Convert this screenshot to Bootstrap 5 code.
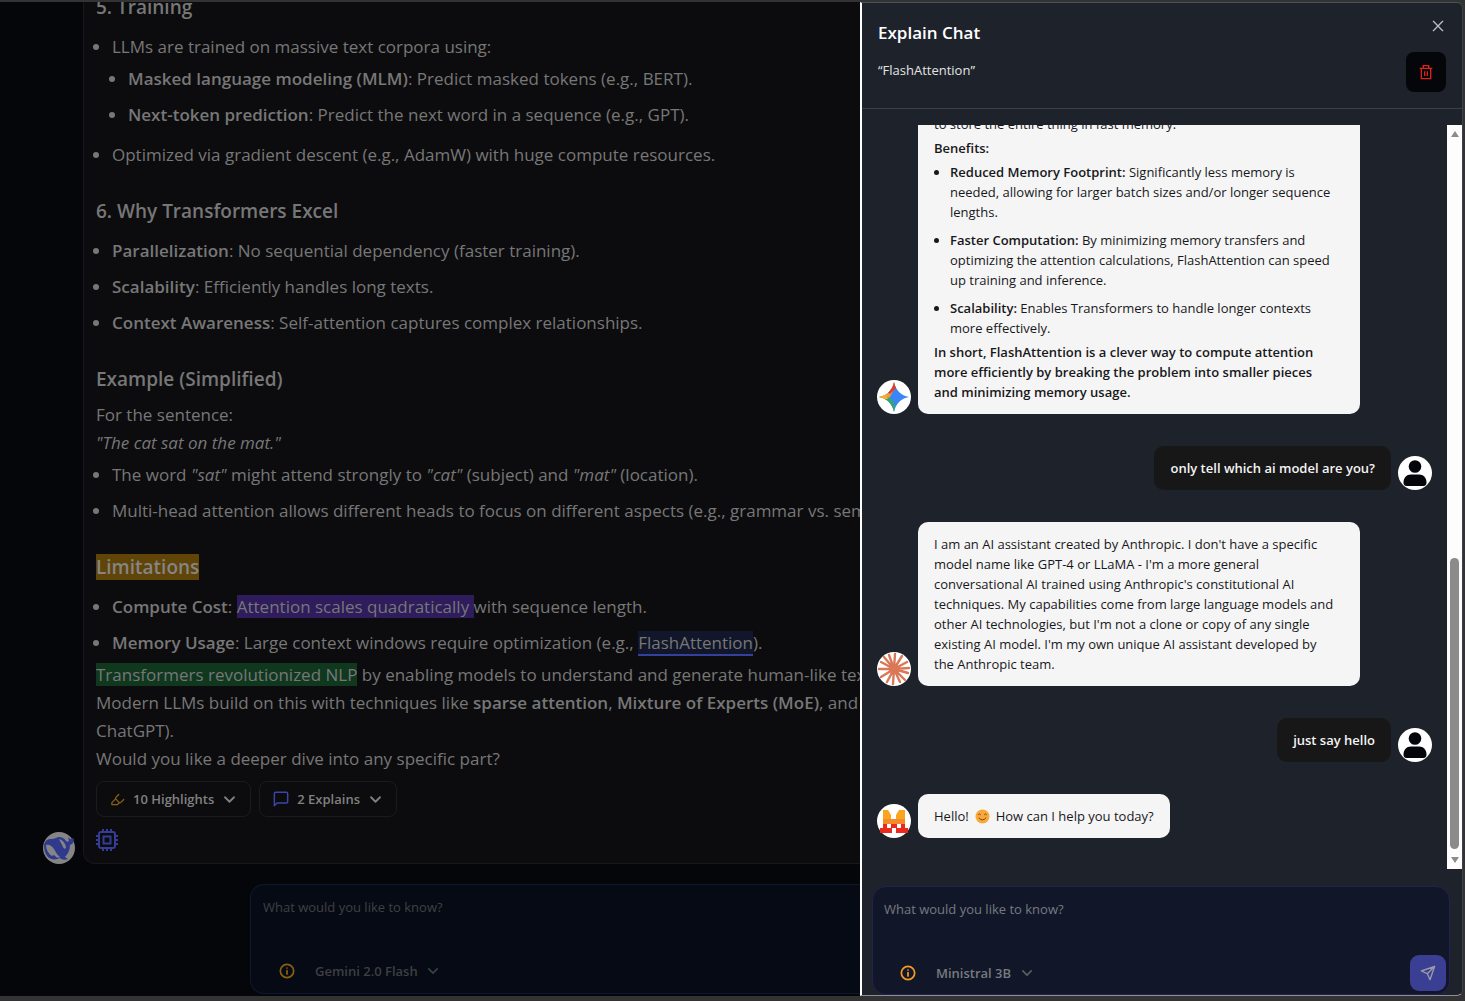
<!DOCTYPE html>
<html lang="en">
<head>
<meta charset="utf-8">
<meta name="viewport" content="width=device-width, initial-scale=1">
<title>Explain Chat</title>
<link href="https://cdn.jsdelivr.net/npm/bootstrap@5.3.0/dist/css/bootstrap.min.css" rel="stylesheet">
<style>
body{background:#333;font-family:"Open Sans","Noto Sans",sans-serif;font-size:13px;line-height:20px;color:#777}
svg{display:block;flex:none}
strong{font-weight:600}
.frame{height:100vh;padding:2px 2px 5px 0}
.page-pane{background:#05060a;min-width:0}
.answer-row{padding-left:43px}
.avatar-sm{width:32px;height:32px}
.avatar-md{width:34px;height:34px}
.answer{background:#0c0c0e;border:1px solid #18181b;border-width:0 0 1px 1px;border-radius:0 0 0 12px;padding:0 12px 12px;font-size:17px;line-height:28px;white-space:nowrap}
.answer h2{font-size:19px;line-height:28px;font-weight:600;margin:24px 0 8px}
.answer p,.bubble p{margin:0}
.dots{margin:0;padding-left:16px;list-style-type:disc}
.dots .dots{list-style-type:disc}
.dots li{padding:4px 0}
.hl-amber{background:#604408;color:#858585}
.hl-violet{background:#2e1c5c}
.hl-green{background:#0f381f}
.hl-link{color:#777;text-decoration:none;background:#11162a;border-bottom:2px solid #35409a}
.chip{--bs-btn-color:#808080;--bs-btn-border-color:#1b1b1e;font-size:13px;line-height:20px;font-weight:600;padding:7px 13px;border-radius:8px}
.asker{border:1px solid #0e1830;border-radius:14px;background:#060a14;flex:none}
.asker textarea{background:none;border:0;resize:none;outline:0;color:#777;font-size:13px;line-height:20px;height:40px;padding:0}
.asker textarea::placeholder{color:#3f4144;opacity:1}
.page-asker{margin:20px 0 2px 250px;border-width:1px 0 1px 1px;border-radius:14px 0 0 14px;height:110px;padding:12px}
.picker{appearance:none;background:none;border:0;color:#3d3f42;font-weight:600;font-size:13px;line-height:20px;padding:0;margin-left:20px;outline:0}
.drawer{width:603px;max-width:100%;background:#1e222b;border-left:2px solid #fff;border-radius:0 6px 6px 0;border-top:1px solid #4a525c;border-right:1px solid #3a424c;border-bottom:1px solid #8a9098}
.drawer-head{height:106px;padding:15px 16px 0;border-bottom:1px solid #3b3f46;flex:none}
.drawer-head h1{font-size:17px;line-height:20px;font-weight:600;color:#fff;margin:5px 0 17px}
.drawer-head p{color:#e4e4e4;margin:0;font-weight:500}
.head-actions{gap:18px}
.plain{background:none;border:0;padding:0}
.trash{background:#05060a;border:0;border-radius:8px;width:40px;height:40px}
.thread{padding:0 15px 31px;gap:32px}
.msg{gap:7px}
.bubble{background:#f5f5f5;color:#18181b;border-radius:10px;padding:12px 16px}
.bubble.long{width:442px}
.bubble.mine{background:#171717;color:#f4f4f4;font-weight:600}
.emoji{margin:0 6px}
.track{width:15px;background:#fdfdfd;padding:6px 3px}
.thumb{width:9px;border-radius:5px;background:#8b8b8b;height:291px}
.drawer-asker{background:#111728;border-color:#251f55;margin:17px 12px 0 10px;height:109px;padding:12px 3px 3px 11px}
.drawer-asker textarea::placeholder{color:#777a80}
.drawer-asker .picker{color:#777a80}
.send{background:#3a3f94;border:0;border-radius:9px;width:36px;height:36px}
</style>
</head>
<body>
<svg width="0" height="0" class="position-absolute" aria-hidden="true">
<defs>
<symbol id="chev" viewBox="0 0 24 24"><path d="m6 9 6 6 6-6" fill="none" stroke="currentColor" stroke-width="2.400" stroke-linecap="round" stroke-linejoin="round" transform="translate(-2.400 -2.400) scale(1.200)"/></symbol>
<symbol id="info" viewBox="0 0 24 24"><g fill="none" stroke="currentColor" stroke-width="2.600" stroke-linecap="round"><circle cx="12" cy="12" r="10"/><path d="M12 16.500v-5M12 7.500v.01"/></g></symbol>
<symbol id="person" viewBox="0 0 34 34"><circle cx="17" cy="17" r="17" fill="#fff"/><circle cx="17" cy="10.500" r="6.300" fill="#05060a"/><path d="M5.500 26.500c0-4.500 3-8 7.500-8h8c4.500 0 7.500 3.500 7.500 8 0 2-1 3.500-3 3.500h-17c-2 0-3-1.500-3-3.500z" fill="#05060a"/></symbol>
</defs>
</svg>
<div class="frame d-flex">
  <main class="page-pane flex-fill d-flex flex-column justify-content-end overflow-hidden">
    <div class="answer-row d-flex align-items-end">
      <svg class="avatar-sm me-2" viewBox="0 0 32 32"><circle cx="16" cy="16" r="16" fill="#858585"/><path d="M1 13c1-4 3-6 7-6 3 0 4-1 8-2 3 0 5 1 7 4 1 1 2 1 3 0l-1-4c1 1 2 2 3 2 1-1 2-1 3 0 0 3-1 5-4 6 0 5-2 9-5 12l3 2c-3 1-6 1-8-1-4 2-9 2-12-1C2 22 1 17 1 13z" fill="#2f3a8c"/><path d="M3 13c3-1 6 1 8 4s3 6 6 8c-1 1-3 1-4 0-1-2-3-2-4-1-3-2-6-6-6-11zM16 7c4 1 7 5 7 9-1 1-2 1-3-1-1-3-3-5-4-8z" fill="#858585"/></svg>
      <article class="answer flex-grow-1 flex-shrink-0">
        <h2>5. Training</h2>
        <ul class="dots">
          <li>LLMs are trained on massive text corpora using:
            <ul class="dots">
              <li><strong>Masked language modeling (MLM)</strong>: Predict masked tokens (e.g., BERT).</li>
              <li><strong>Next-token prediction</strong>: Predict the next word in a sequence (e.g., GPT).</li>
            </ul>
          </li>
          <li>Optimized via gradient descent (e.g., AdamW) with huge compute resources.</li>
        </ul>
        <h2>6. Why Transformers Excel</h2>
        <ul class="dots">
          <li><strong>Parallelization</strong>: No sequential dependency (faster training).</li>
          <li><strong>Scalability</strong>: Efficiently handles long texts.</li>
          <li><strong>Context Awareness</strong>: Self-attention captures complex relationships.</li>
        </ul>
        <h2>Example (Simplified)</h2>
        <p>For the sentence:<br><em>"The cat sat on the mat."</em></p>
        <ul class="dots">
          <li>The word <em>"sat"</em> might attend strongly to <em>"cat"</em> (subject) and <em>"mat"</em> (location).</li>
          <li>Multi-head attention allows different heads to focus on different aspects (e.g., grammar vs. semantics).</li>
        </ul>
        <h2><span class="hl-amber">Limitations</span></h2>
        <ul class="dots">
          <li><strong>Compute Cost</strong>: <span class="hl-violet">Attention scales quadratically </span>with sequence length.</li>
          <li><strong>Memory Usage</strong>: Large context windows require optimization (e.g., <a class="hl-link" href="#">FlashAttention</a>).</li>
        </ul>
        <p><span class="hl-green">Transformers revolutionized NLP</span> by enabling models to understand and generate human-like text.<br>Modern LLMs build on this with techniques like <strong>sparse attention</strong>, <strong>Mixture of Experts (MoE)</strong>, and<br>ChatGPT).<br>Would you like a deeper dive into any specific part?</p>
        <div class="d-flex gap-2 mt-2">
          <button class="btn chip d-flex align-items-center gap-2" type="button"><svg width="15" height="15" viewBox="0 0 24 24" fill="none" stroke="#8a6216" stroke-width="2" stroke-linecap="round" stroke-linejoin="round"><path d="m9 11-6 6v3h9l3-3"/><path d="m22 12-4.600 4.600a2 2 0 0 1-2.800 0l-5.200-5.200a2 2 0 0 1 0-2.800L14 4"/></svg>10 Highlights<svg width="15" height="15"><use href="#chev"/></svg></button>
          <button class="btn chip d-flex align-items-center gap-2" type="button"><svg width="16" height="16" viewBox="0 0 24 24" fill="none" stroke="#3a46a8" stroke-width="2.200" stroke-linejoin="round"><path d="M22 16a2 2 0 0 1-2 2H6l-4 4V4a2 2 0 0 1 2-2h16a2 2 0 0 1 2 2z"/></svg>2 Explains<svg width="15" height="15"><use href="#chev"/></svg></button>
        </div>
        <svg class="mt-2 pt-1" width="22" height="26" viewBox="0 0 22 22" fill="none" stroke="#343c96" stroke-width="2"><rect x="3" y="3" width="16" height="16" rx="2"/><rect x="7.500" y="7.500" width="7" height="7"/><path d="M7 0v3M11 0v3M15 0v3M7 19v3M11 19v3M15 19v3M0 7h3M0 11h3M0 15h3M19 7h3M19 11h3M19 15h3"/></svg>
      </article>
    </div>
    <form class="asker page-asker d-flex flex-column justify-content-between">
      <textarea class="w-100" aria-label="Question" placeholder="What would you like to know?"></textarea>
      <div class="d-flex align-items-center ps-3">
        <svg width="16" height="16" color="#8a6010"><use href="#info"/></svg>
        <select class="picker" aria-label="Model"><option>Gemini 2.0 Flash</option></select>
        <svg width="14" height="14" class="ms-2" color="#3d3f42"><use href="#chev"/></svg>
      </div>
    </form>
  </main>
  <aside class="drawer d-flex flex-column flex-shrink-0" aria-label="Explain Chat">
    <header class="drawer-head d-flex justify-content-between">
      <div><h1>Explain Chat</h1><p>“FlashAttention”</p></div>
      <div class="head-actions d-flex flex-column align-items-end">
        <button class="plain" type="button" aria-label="Close"><svg width="16" height="16" viewBox="0 0 24 24" stroke="#b9bcc2" stroke-width="2" stroke-linecap="round"><path d="M5 5l14 14M19 5 5 19"/></svg></button>
        <button class="trash d-flex align-items-center justify-content-center" type="button" aria-label="Delete chat"><svg width="16" height="16" viewBox="0 0 24 24" fill="none" stroke="#dc2418" stroke-width="2"><path d="M2.500 6.500h19M5 6.500V22h14V6.500M8 6V2.500h8V6M10 11v7M14 11v7"/></svg></button>
      </div>
    </header>
    <div class="d-flex flex-fill overflow-hidden mt-3" style="min-height:0">
      <div class="thread flex-fill d-flex flex-column justify-content-end">
        <div class="msg d-flex align-items-end">
          <svg class="avatar-md" viewBox="0 0 34 34"><defs><clipPath id="spark"><path d="M17 2c1.500 8 7 13.500 15 15-8 1.500-13.500 7-15 15-1.500-8-7-13.500-15-15C10 15.500 15.500 10 17 2z"/></clipPath></defs><circle cx="17" cy="17" r="17" fill="#fff"/><g clip-path="url(#spark)"><path d="M0 0h34v34H0z" fill="#3b86f5"/><path d="M0 0h22L13 17 7 21H0z" fill="#e8a13a"/><path d="M10 0h12l-3 8-6 6-3-2z" fill="#e33b2b"/><path d="M7 17l6 1 4 4 3 12H8z" fill="#33a677"/><path d="M0 13h9l2 6H0z" fill="#f8ae28"/></g></svg>
          <div class="bubble long">
            <p>to store the entire thing in fast memory.</p>
            <p class="pt-1"><strong>Benefits:</strong></p>
            <ul class="dots">
              <li><strong>Reduced Memory Footprint:</strong> Significantly less memory is<br>needed, allowing for larger batch sizes and/or longer sequence<br>lengths.</li>
              <li><strong>Faster Computation:</strong> By minimizing memory transfers and<br>optimizing the attention calculations, FlashAttention can speed<br>up training and inference.</li>
              <li><strong>Scalability:</strong> Enables Transformers to handle longer contexts<br>more effectively.</li>
            </ul>
            <p><strong>In short, FlashAttention is a clever way to compute attention<br>more efficiently by breaking the problem into smaller pieces<br>and minimizing memory usage.</strong></p>
          </div>
        </div>
        <div class="msg d-flex align-items-end justify-content-end">
          <div class="bubble mine">only tell which ai model are you?</div>
          <svg class="avatar-md"><use href="#person"/></svg>
        </div>
        <div class="msg d-flex align-items-end">
          <svg class="avatar-md" viewBox="-17 -17 34 34"><circle r="17" fill="#fff"/><path d="M0 0 1-15M0 0 8-13M0 0 13-7M0 0 15-1M0 0 14 4M0 0 11 11M0 0 6 13M0 0-1 15M0 0-7 13M0 0-13 8M0 0-15 0M0 0-13-7M0 0-10-12M0 0-5-14" stroke="#d97757" stroke-width="2.400" stroke-linecap="round"/><circle r="5" fill="#d97757"/></svg>
          <div class="bubble long">I am an AI assistant created by Anthropic. I don't have a specific<br>model name like GPT-4 or LLaMA - I'm a more general<br>conversational AI trained using Anthropic's constitutional AI<br>techniques. My capabilities come from large language models and<br>other AI technologies, but I'm not a clone or copy of any single<br>existing AI model. I'm my own unique AI assistant developed by<br>the Anthropic team.</div>
        </div>
        <div class="msg d-flex align-items-end justify-content-end">
          <div class="bubble mine">just say hello</div>
          <svg class="avatar-md"><use href="#person"/></svg>
        </div>
        <div class="msg d-flex align-items-end">
          <svg class="avatar-md" viewBox="0 0 34 34"><circle cx="17" cy="17" r="17" fill="#fff"/><path d="M6 6h5l3 5v4h5v-4l3-5h6v10H6z" fill="#fba51f"/><path d="M6 15h22v5H6z" fill="#f58a2a"/><path d="M6 20h22v4h3v5H19v-5h-4v5H3v-5h3z" fill="#ea2a1c"/><path d="M10 20h4v4h-4zM20 20h4v4h-4z" fill="#fff"/></svg>
          <div class="bubble d-flex align-items-center">Hello!<svg class="emoji" width="15" height="15" viewBox="0 0 14 15" fill="none" stroke="#7a4208" stroke-linecap="round"><circle cx="7" cy="7.500" r="7" fill="#f9a93a" stroke="none"/><path d="M3 5.500q1-1.500 2 0M9 5.500q1-1.500 2 0M3.500 9q3.500 4 7 0"/></svg>How can I help you today?</div>
        </div>
      </div>
      <div class="track d-flex flex-column justify-content-between align-items-center" aria-hidden="true">
        <svg width="8" height="6"><path d="M4 0 8 6H0z" fill="#8b8b8b"/></svg>
        <div class="d-flex flex-column align-items-center gap-2"><div class="thumb"></div><svg width="8" height="6"><path d="M4 6 8 0H0z" fill="#8b8b8b"/></svg></div>
      </div>
    </div>
    <form class="asker drawer-asker d-flex flex-column justify-content-between">
      <textarea class="w-100" aria-label="Explain question" placeholder="What would you like to know?"></textarea>
      <div class="d-flex align-items-center ps-3">
        <svg width="16" height="16" color="#f59a23"><use href="#info"/></svg>
        <select class="picker" aria-label="Explain model"><option>Ministral 3B</option></select>
        <svg width="14" height="14" class="ms-2" color="#5a5d63"><use href="#chev"/></svg>
        <button class="send ms-auto d-flex align-items-center justify-content-center" type="button" aria-label="Send"><svg width="16" height="16" viewBox="0 0 24 24" fill="none" stroke="#999ca5" stroke-width="2" stroke-linejoin="round"><path d="M22 2 2 9l9 4 4 9zM22 2 11 13"/></svg></button>
      </div>
    </form>
  </aside>
</div>
<script src="https://cdn.jsdelivr.net/npm/bootstrap@5.3.0/dist/js/bootstrap.bundle.min.js"></script>
</body>
</html>
